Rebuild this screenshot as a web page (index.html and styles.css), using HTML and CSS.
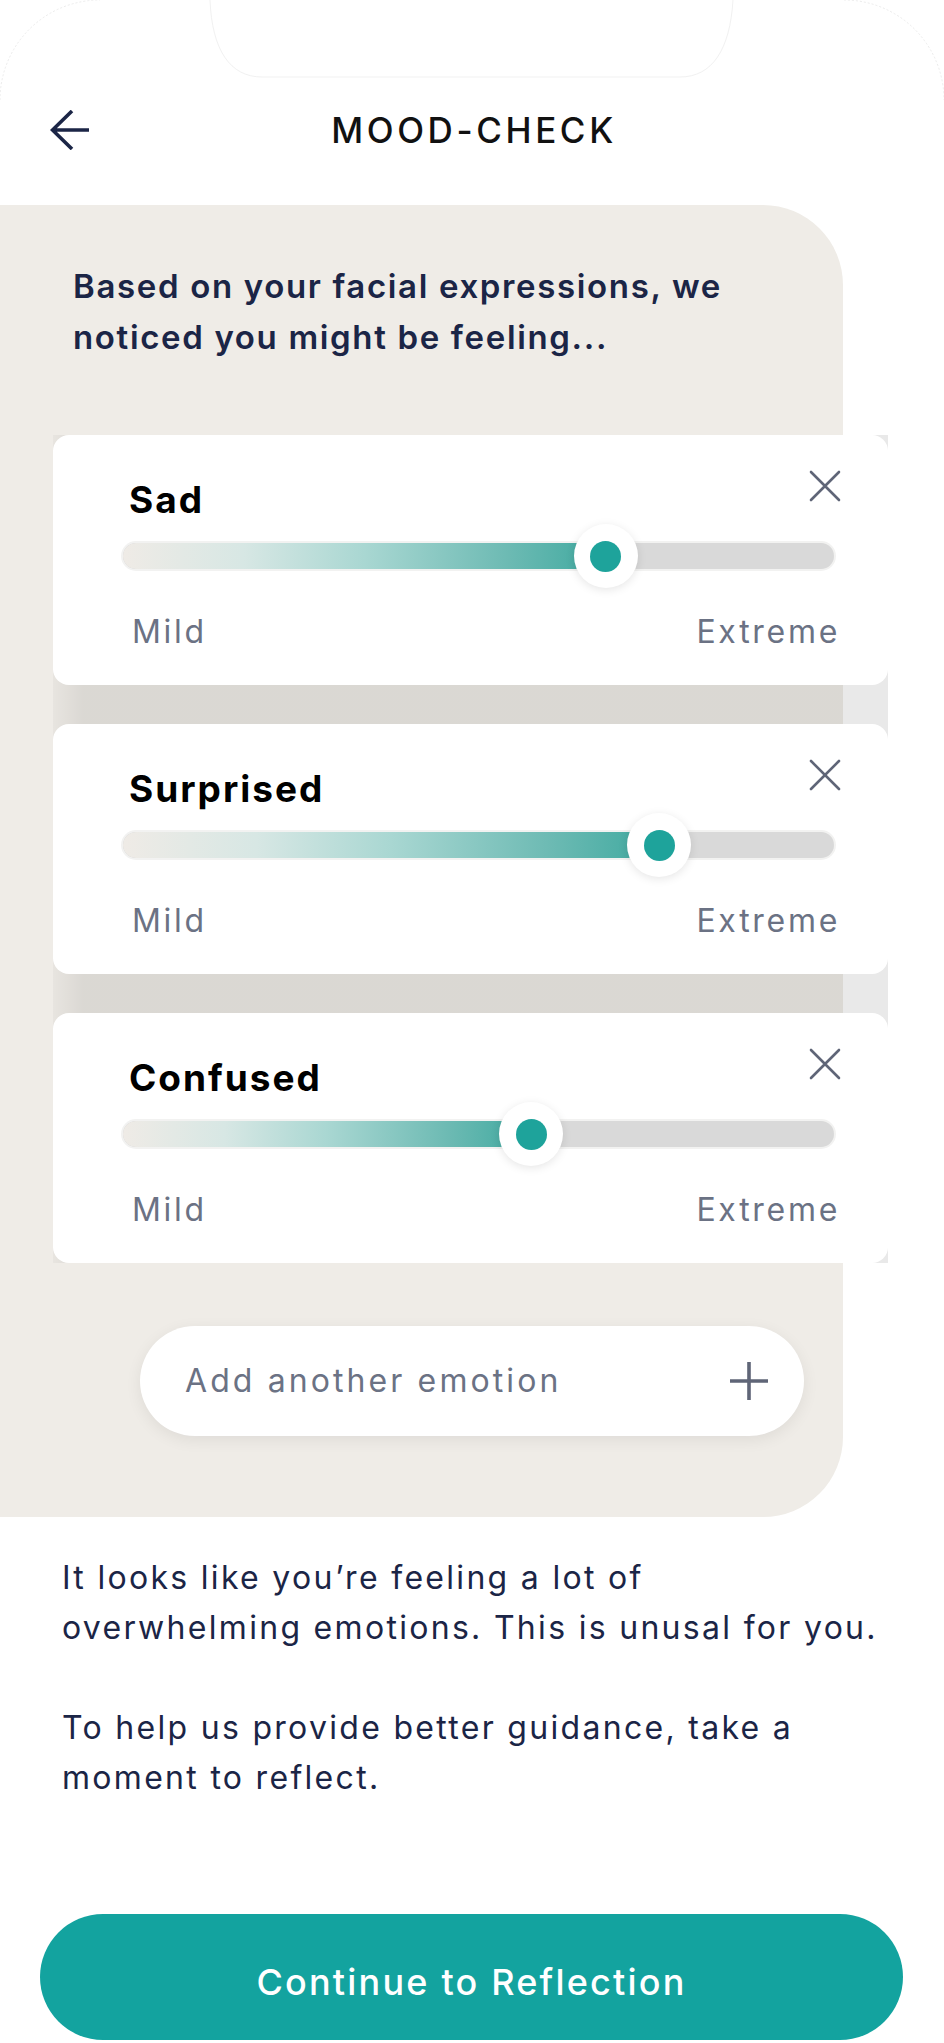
FILE: index.html
```html
<!DOCTYPE html>
<html lang="en">
<head>
<meta charset="utf-8">
<title>Mood-check</title>
<link rel="stylesheet" href="styles.css">
</head>
<body>
<div class="screen">
  <svg class="frame" width="944" height="120" viewBox="0 0 944 120" aria-hidden="true">
    <path d="M0 100 A100 100 0 0 1 100 0" fill="none" stroke="#ececec" stroke-width="1" stroke-dasharray="2 2"/>
    <path d="M210 0 C212 50 230 77 262 77 H680 C712 77 730 50 733 0" fill="none" stroke="#f1f1f1" stroke-width="1"/>
    <path d="M844 0 A100 100 0 0 1 944 100" fill="none" stroke="#ececec" stroke-width="1" stroke-dasharray="2 2"/>
  </svg>

  <header class="topbar">
    <button class="back" aria-label="Back">
      <svg width="40" height="40" viewBox="0 0 40 40"><path d="M39 20H3M22 1L2.5 20L22 39" fill="none" stroke="#1b2546" stroke-width="3.6" stroke-linejoin="miter"/></svg>
    </button>
    <h1 class="title">MOOD-CHECK</h1>
    <span class="spacer"></span>
  </header>

  <section class="panel">
    <p class="intro">Based on your facial expressions, we<br>noticed you might be feeling...</p>

    <div class="cards">
      <article class="card">
        <div class="card-head">
          <h2 class="emotion">Sad</h2>
          <svg class="close" width="32" height="32" viewBox="0 0 32 32"><path d="M2 2L30 30M30 2L2 30" stroke="#5f6577" stroke-width="2.6" stroke-linecap="round"/></svg>
        </div>
        <div class="slider" style="--v:67.9%">
          <div class="track"><div class="fill"></div></div>
          <div class="thumb"><span class="dot"></span></div>
        </div>
        <div class="scale"><span>Mild</span><span>Extreme</span></div>
      </article>

      <article class="card">
        <div class="card-head">
          <h2 class="emotion">Surprised</h2>
          <svg class="close" width="32" height="32" viewBox="0 0 32 32"><path d="M2 2L30 30M30 2L2 30" stroke="#5f6577" stroke-width="2.6" stroke-linecap="round"/></svg>
        </div>
        <div class="slider" style="--v:75.4%">
          <div class="track"><div class="fill"></div></div>
          <div class="thumb"><span class="dot"></span></div>
        </div>
        <div class="scale"><span>Mild</span><span>Extreme</span></div>
      </article>

      <article class="card">
        <div class="card-head">
          <h2 class="emotion">Confused</h2>
          <svg class="close" width="32" height="32" viewBox="0 0 32 32"><path d="M2 2L30 30M30 2L2 30" stroke="#5f6577" stroke-width="2.6" stroke-linecap="round"/></svg>
        </div>
        <div class="slider" style="--v:57.4%">
          <div class="track"><div class="fill"></div></div>
          <div class="thumb"><span class="dot"></span></div>
        </div>
        <div class="scale"><span>Mild</span><span>Extreme</span></div>
      </article>
    </div>

    <button class="add">
      <span>Add another emotion</span>
      <svg width="40" height="40" viewBox="0 0 40 40"><path d="M20 1V39M1 20H39" stroke="#5f6577" stroke-width="3.6"/></svg>
    </button>
  </section>

  <section class="message">
    <p>It looks like you’re feeling a lot of<br>overwhelming emotions. This is unusal for you.</p>
    <p>To help us provide better guidance, take a<br>moment to reflect.</p>
  </section>

  <button class="cta">Continue to Reflection</button>
</div>
</body>
</html>
```

FILE: styles.css
```css
* { box-sizing: border-box; }

html, body {
  margin: 0;
  padding: 0;
  background: #ffffff;
}

body {
  font-family: Inter, "Open Sans", "Liberation Sans", sans-serif;
  color: #1b2546;
}

.screen {
  position: relative;
  width: 944px;
  height: 2043px;
  overflow: hidden;
  background: #fff;
}

.frame {
  position: absolute;
  top: 0;
  left: 0;
  pointer-events: none;
}

/* Header */
.topbar {
  display: grid;
  grid-template-columns: 1fr auto 1fr;
  align-items: center;
  height: 205px;
  padding: 100px 0 45px 0;
}

.back {
  justify-self: start;
  margin-left: 50px;
  width: 40px;
  height: 40px;
  padding: 0;
  border: 0;
  background: none;
  display: flex;
}

.title {
  margin: 0 0 0 4px;
  font-size: 35px;
  font-weight: 500;
  letter-spacing: 3.6px;
  color: #111111;
  line-height: 60px;
}

/* Beige panel */
.panel {
  width: 843px;
  background: #efece7;
  border-radius: 0 80px 80px 0;
  padding: 56px 0 81px 0;
}

.intro {
  margin: 0 0 72px 73px;
  font-size: 33px;
  line-height: 51px;
  font-weight: 600;
  letter-spacing: 1.65px;
  color: #1b2546;
}

.cards {
  margin-left: 53px;
  width: 835px;
  display: flex;
  flex-direction: column;
  gap: 39px;
  background: linear-gradient(90deg, rgba(0,0,0,0.03) 0, rgba(0,0,0,0.085) 30px, rgba(0,0,0,0.085) 100%);
}

.card {
  height: 250px;
  background: #ffffff;
  border-radius: 16px;
  padding: 42px 54px 0 70px;
}

.card-head {
  display: flex;
  justify-content: space-between;
  align-items: flex-start;
}

.emotion {
  margin: 0 0 0 6px;
  font-size: 37px;
  line-height: 45px;
  font-weight: 700;
  letter-spacing: 2px;
  color: #000000;
}

.close {
  margin-top: -7px;
  margin-right: -7px;
}

.slider {
  position: relative;
  height: 64px;
  margin-top: 2px;
  display: flex;
  align-items: center;
}

.track {
  width: 100%;
  height: 26px;
  border-radius: 13px;
  background: #d9d9d9;
  box-shadow: 0 0 0 2px #f2f2f1;
  overflow: hidden;
}

.fill {
  width: var(--v);
  height: 100%;
  border-radius: 13px 0 0 13px;
  background: linear-gradient(90deg, #efebe6 0%, #d7e7e4 25%, #a9d7d2 50%, #6cbab3 80%, #3ea99f 100%);
}

.thumb {
  position: absolute;
  top: 0;
  left: calc(var(--v) - 32px);
  width: 64px;
  height: 64px;
  border-radius: 50%;
  background: #ffffff;
  box-shadow: 0 2px 10px rgba(0,0,0,0.10);
  display: flex;
  align-items: center;
  justify-content: center;
}

.dot {
  width: 31px;
  height: 31px;
  border-radius: 50%;
  background: #1ea39b;
}

.scale {
  display: flex;
  justify-content: space-between;
  margin: 24px -6px 0 9px;
  font-size: 32px;
  line-height: 40px;
  letter-spacing: 2.7px;
  color: #6b7284;
}

/* Add emotion pill */
.add {
  display: flex;
  align-items: center;
  justify-content: space-between;
  margin: 63px 0 0 140px;
  width: 664px;
  height: 110px;
  padding: 0 35px 0 45px;
  border: 0;
  border-radius: 55px;
  background: #ffffff;
  box-shadow: 0 4px 16px rgba(0,0,0,0.07);
  font-family: inherit;
  font-size: 32px;
  letter-spacing: 3.1px;
  color: #6b7284;
}

.add span {
  padding-bottom: 2px;
}

/* Message */
.message {
  padding: 36px 0 0 62px;
}

.message p {
  margin: 0 0 50px 0;
  font-size: 32px;
  line-height: 50px;
  letter-spacing: 2.3px;
  color: #1b2546;
}

.message p:last-child {
  margin-bottom: 0;
}

/* CTA */
.cta {
  display: block;
  margin: 111px 0 0 40px;
  width: 863px;
  height: 126px;
  border: 0;
  border-radius: 63px;
  background: #13a39f;
  color: #ffffff;
  font-family: inherit;
  font-size: 36px;
  font-weight: 500;
  letter-spacing: 2.2px;
  padding-top: 10px;
}
```
